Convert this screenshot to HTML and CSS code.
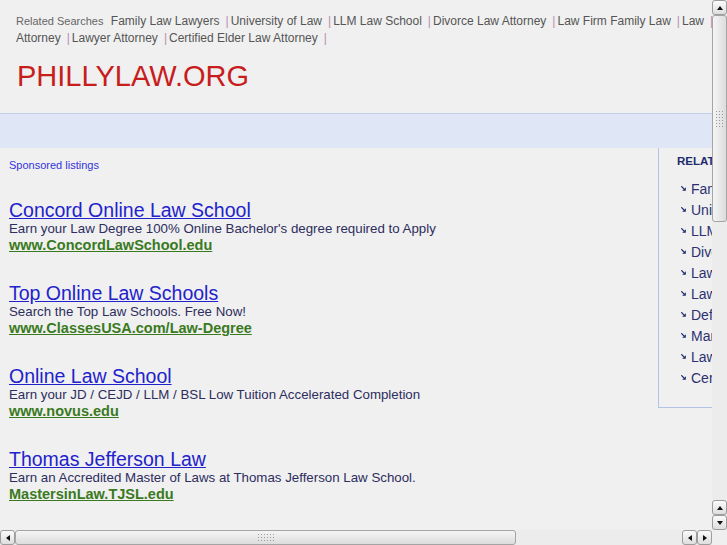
FILE: index.html
```html
<!DOCTYPE html>
<html>
<head>
<meta charset="utf-8">
<title>phillylaw.org</title>
<link rel="stylesheet" href="styles.css">
</head>
<body>
<div class="page">
  <div class="header">
    <div class="related">
      <span class="rel-label">Related Searches</span>
      <a href="#">Family Law Lawyers</a><span class="sep">|</span><a href="#">University of Law</a><span class="sep">|</span><a href="#">LLM Law School</a><span class="sep">|</span><a href="#">Divorce Law Attorney</a><span class="sep">|</span><a href="#">Law Firm Family Law</a><span class="sep">|</span><a href="#">Law</a><span class="sep">|</span><a href="#">Defense Attorney</a><span class="sep">|</span><a href="#">Marriage Attorney</a><span class="sep">|</span><a href="#">Lawyer Attorney</a><span class="sep">|</span><a href="#">Certified Elder Law Attorney</a><span class="sep">|</span>
    </div>
    <div class="logo">PHILLYLAW.ORG</div>
  </div>
  <div class="band"></div>
  <div class="content">
    <div class="main">
      <div class="sponsored">Sponsored listings</div>
      <div class="ad">
        <a class="ad-title" href="#">Concord Online Law School</a>
        <div class="ad-desc">Earn your Law Degree 100% Online Bachelor's degree required to Apply</div>
        <a class="ad-url" href="#">www.ConcordLawSchool.edu</a>
      </div>
      <div class="ad">
        <a class="ad-title" href="#">Top Online Law Schools</a>
        <div class="ad-desc">Search the Top Law Schools. Free Now!</div>
        <a class="ad-url" href="#">www.ClassesUSA.com/Law-Degree</a>
      </div>
      <div class="ad">
        <a class="ad-title" href="#">Online Law School</a>
        <div class="ad-desc">Earn your JD / CEJD / LLM / BSL Low Tuition Accelerated Completion</div>
        <a class="ad-url" href="#">www.novus.edu</a>
      </div>
      <div class="ad">
        <a class="ad-title" href="#">Thomas Jefferson Law</a>
        <div class="ad-desc">Earn an Accredited Master of Laws at Thomas Jefferson Law School.</div>
        <a class="ad-url" href="#">MastersinLaw.TJSL.edu</a>
      </div>
    </div>
    <div class="side">
      <div class="side-box">
        <div class="side-head">RELATED SEARCHES</div>
        <ul class="side-list">
          <li><svg class="arr" width="5" height="5" viewBox="0 0 5 5"><path d="M0.3 0.3 L3 3" stroke="#1d2a6e" stroke-width="1.2"/><path d="M1.2 4.8 L4.8 4.8 L4.8 1.2 Z" fill="#1d2a6e"/></svg><a href="#">Family Law Lawyers</a></li>
          <li><svg class="arr" width="5" height="5" viewBox="0 0 5 5"><path d="M0.3 0.3 L3 3" stroke="#1d2a6e" stroke-width="1.2"/><path d="M1.2 4.8 L4.8 4.8 L4.8 1.2 Z" fill="#1d2a6e"/></svg><a href="#">University of Law</a></li>
          <li><svg class="arr" width="5" height="5" viewBox="0 0 5 5"><path d="M0.3 0.3 L3 3" stroke="#1d2a6e" stroke-width="1.2"/><path d="M1.2 4.8 L4.8 4.8 L4.8 1.2 Z" fill="#1d2a6e"/></svg><a href="#">LLM Law School</a></li>
          <li><svg class="arr" width="5" height="5" viewBox="0 0 5 5"><path d="M0.3 0.3 L3 3" stroke="#1d2a6e" stroke-width="1.2"/><path d="M1.2 4.8 L4.8 4.8 L4.8 1.2 Z" fill="#1d2a6e"/></svg><a href="#">Divorce Law Attorney</a></li>
          <li><svg class="arr" width="5" height="5" viewBox="0 0 5 5"><path d="M0.3 0.3 L3 3" stroke="#1d2a6e" stroke-width="1.2"/><path d="M1.2 4.8 L4.8 4.8 L4.8 1.2 Z" fill="#1d2a6e"/></svg><a href="#">Law Firm Family Law</a></li>
          <li><svg class="arr" width="5" height="5" viewBox="0 0 5 5"><path d="M0.3 0.3 L3 3" stroke="#1d2a6e" stroke-width="1.2"/><path d="M1.2 4.8 L4.8 4.8 L4.8 1.2 Z" fill="#1d2a6e"/></svg><a href="#">Law</a></li>
          <li><svg class="arr" width="5" height="5" viewBox="0 0 5 5"><path d="M0.3 0.3 L3 3" stroke="#1d2a6e" stroke-width="1.2"/><path d="M1.2 4.8 L4.8 4.8 L4.8 1.2 Z" fill="#1d2a6e"/></svg><a href="#">Defense Attorney</a></li>
          <li><svg class="arr" width="5" height="5" viewBox="0 0 5 5"><path d="M0.3 0.3 L3 3" stroke="#1d2a6e" stroke-width="1.2"/><path d="M1.2 4.8 L4.8 4.8 L4.8 1.2 Z" fill="#1d2a6e"/></svg><a href="#">Marriage Attorney</a></li>
          <li><svg class="arr" width="5" height="5" viewBox="0 0 5 5"><path d="M0.3 0.3 L3 3" stroke="#1d2a6e" stroke-width="1.2"/><path d="M1.2 4.8 L4.8 4.8 L4.8 1.2 Z" fill="#1d2a6e"/></svg><a href="#">Lawyer Attorney</a></li>
          <li><svg class="arr" width="5" height="5" viewBox="0 0 5 5"><path d="M0.3 0.3 L3 3" stroke="#1d2a6e" stroke-width="1.2"/><path d="M1.2 4.8 L4.8 4.8 L4.8 1.2 Z" fill="#1d2a6e"/></svg><a href="#">Certified Elder Law Attorney</a></li>
        </ul>
      </div>
    </div>
  </div>
</div>

<div class="vscroll">
  <div class="sbtn"><span class="tri up"></span></div>
  <div class="vtrack"><div class="vthumb"><span class="grip"></span></div></div>
  <div class="sbtn"><span class="tri up"></span></div>
  <div class="sbtn"><span class="tri down"></span></div>
</div>
<div class="hscroll">
  <div class="sbtn"><span class="tri left"></span></div>
  <div class="htrack"><div class="hthumb"><span class="grip"></span></div></div>
  <div class="sbtn"><span class="tri left"></span></div>
  <div class="sbtn"><span class="tri right"></span></div>
</div>
<div class="corner"></div>
</body>
</html>
```

FILE: styles.css
```css
html, body {
  margin: 0;
  padding: 0;
  overflow: hidden;
  background: #f0f0f0;
  font-family: "Liberation Sans", Arial, sans-serif;
}
a { text-decoration: none; }

.page {
  width: 948px;
}

.header {
  padding: 13px 16px 0 16px;
  height: 113px;
  box-sizing: border-box;
}
.related {
  font-size: 12px;
  line-height: 17px;
  color: #555;
}
.rel-label {
  font-size: 11px;
  color: #666;
  margin-right: 4px;
}
.related a { color: #555; }
.sep {
  color: #b58fb5;
  margin: 0 2px 0 6px;
}
.logo {
  margin-top: 12px;
  margin-left: 1px;
  font-size: 29px;
  line-height: 34px;
  color: #c81d1d;
}

.band {
  height: 34px;
  background: #dfe6f5;
  border-top: 1px solid #c3cee8;
}

.content {
  display: grid;
  grid-template-columns: 658px 1fr;
}
.main {
  padding: 11px 0 0 9px;
}
.sponsored {
  font-size: 11px;
  line-height: 13px;
  color: #3333dd;
  margin-bottom: 28px;
}
.ad {
  margin-bottom: 29px;
}
.ad-title {
  display: block;
  font-size: 19.5px;
  line-height: 20px;
  color: #2222cc;
  text-decoration: underline;
}
.ad-desc {
  font-size: 13.3px;
  line-height: 17px;
  color: #2d2d5e;
}
.ad-url {
  display: block;
  font-size: 14.5px;
  line-height: 17px;
  font-weight: bold;
  color: #3a7a1e;
  text-decoration: underline;
}

.side-box {
  border-left: 1px solid #b3c1e4;
  border-bottom: 1px solid #b3c1e4;
  padding: 6px 0 18px 18px;
}
.side-head {
  font-size: 11.5px;
  line-height: 14px;
  font-weight: bold;
  color: #1d2a6e;
  margin-bottom: 11px;
}
.side-list {
  list-style: none;
  margin: 0;
  padding: 0 0 0 4px;
}
.side-list li {
  font-size: 14px;
  line-height: 21px;
  display: flex;
  align-items: center;
}
.side-list a { color: #2d3070; }
.arr {
  margin-right: 5px;
  margin-top: -3px;
}

/* simulated browser scrollbars */
.vscroll {
  position: fixed;
  top: 0;
  right: 0;
  width: 15px;
  height: 530px;
  display: flex;
  flex-direction: column;
  background: #eaeaea;
}
.hscroll {
  position: fixed;
  left: 0;
  bottom: 0;
  width: 712px;
  height: 15px;
  display: flex;
  background: #eaeaea;
}
.corner {
  position: fixed;
  right: 0;
  bottom: 0;
  width: 15px;
  height: 15px;
  background: #efefef;
}
.sbtn {
  width: 15px;
  height: 15px;
  flex: none;
  box-sizing: border-box;
  border: 1px solid #9d9d9d;
  border-radius: 3px;
  background: linear-gradient(#fbfbfb, #dedede);
  display: flex;
  align-items: center;
  justify-content: center;
}
.tri { width: 0; height: 0; }
.tri.up { border-left: 3px solid transparent; border-right: 3px solid transparent; border-bottom: 4px solid #111; }
.tri.down { border-left: 3px solid transparent; border-right: 3px solid transparent; border-top: 4px solid #111; }
.tri.left { border-top: 3px solid transparent; border-bottom: 3px solid transparent; border-right: 4px solid #111; }
.tri.right { border-top: 3px solid transparent; border-bottom: 3px solid transparent; border-left: 4px solid #111; }

.vtrack, .htrack {
  flex: 1;
  background-color: #ececec;
  background-image: radial-gradient(#dcdcdc 0.6px, transparent 0.7px);
  background-size: 2px 2px;
  display: flex;
}
.vtrack { flex-direction: column; }
.vthumb {
  height: 207px;
  box-sizing: border-box;
  border: 1px solid #a4a4a4;
  border-radius: 3px;
  background: linear-gradient(90deg, #f5f5f5, #dcdcdc);
  display: flex;
  align-items: center;
  justify-content: center;
}
.hthumb {
  width: 501px;
  box-sizing: border-box;
  border: 1px solid #a4a4a4;
  border-radius: 3px;
  background: linear-gradient(#f5f5f5, #dcdcdc);
  display: flex;
  align-items: center;
  justify-content: center;
}
.grip {
  display: block;
  background-image: radial-gradient(#9a9a9a 0.7px, transparent 0.9px);
  background-size: 3px 3px;
}
.hthumb .grip { width: 18px; height: 9px; }
.vthumb .grip { width: 9px; height: 18px; }
```
